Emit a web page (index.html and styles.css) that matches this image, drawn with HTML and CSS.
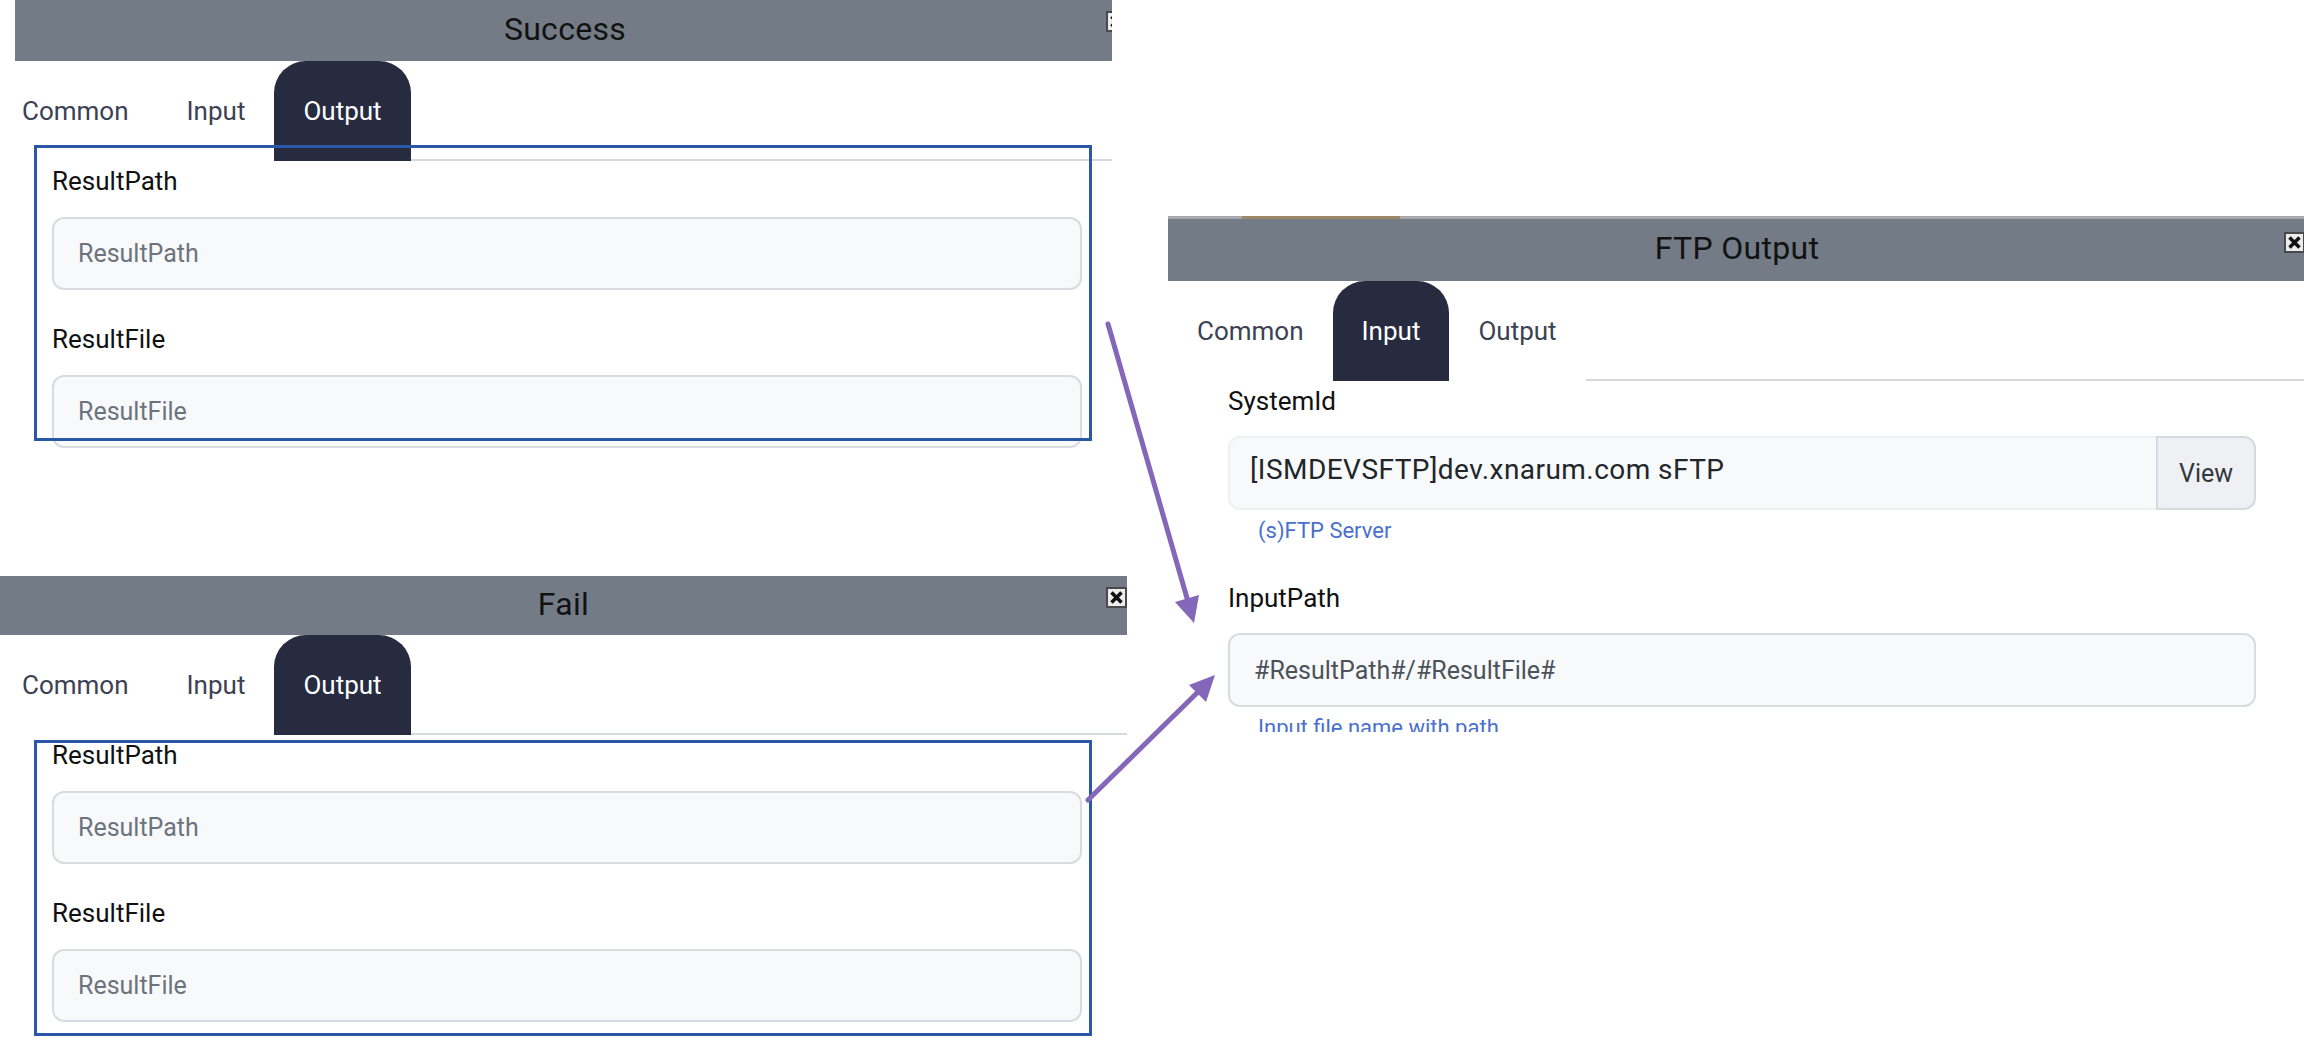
FILE: index.html
```html
<!DOCTYPE html>
<html lang="en">
<head>
<meta charset="utf-8">
<title>Flow mapping</title>
<link rel="stylesheet" href="styles.css">
</head>
<body>
<div class="canvas">

  <section class="win win-success">
    <div class="win-inner">
      <header class="win-head head-success">
        <span class="win-title">Success</span>
        <svg class="close-icon" width="21" height="21" viewBox="0 0 21 21"><rect x="1" y="1" width="19" height="19" fill="#ececec" stroke="#4a4a4a" stroke-width="2"/><path d="M5.5 5.5 L15.5 15.5 M15.5 5.5 L5.5 15.5" stroke="#111" stroke-width="3.5"/></svg>
      </header>
      <nav class="tabs tabs-shift">
        <span class="tab">Common</span>
        <span class="tab">Input</span>
        <span class="tab active">Output</span>
        <span class="tab-fill"></span>
      </nav>
      <div class="form">
        <div class="group">
          <label class="label">ResultPath</label>
          <input class="field" placeholder="ResultPath">
        </div>
        <div class="group">
          <label class="label">ResultFile</label>
          <input class="field" placeholder="ResultFile">
        </div>
      </div>
      <div class="highlight hl-success"></div>
    </div>
  </section>

  <section class="win win-fail">
    <div class="win-inner">
      <header class="win-head head-fail">
        <span class="win-title">Fail</span>
        <svg class="close-icon" width="21" height="21" viewBox="0 0 21 21"><rect x="1" y="1" width="19" height="19" fill="#ececec" stroke="#4a4a4a" stroke-width="2"/><path d="M5.5 5.5 L15.5 15.5 M15.5 5.5 L5.5 15.5" stroke="#111" stroke-width="3.5"/></svg>
      </header>
      <nav class="tabs tabs-shift">
        <span class="tab">Common</span>
        <span class="tab">Input</span>
        <span class="tab active">Output</span>
        <span class="tab-fill"></span>
      </nav>
      <div class="form">
        <div class="group">
          <label class="label">ResultPath</label>
          <input class="field" placeholder="ResultPath">
        </div>
        <div class="group">
          <label class="label">ResultFile</label>
          <input class="field" placeholder="ResultFile">
        </div>
      </div>
      <div class="highlight hl-fail"></div>
    </div>
  </section>

  <section class="win win-ftp">
    <div class="win-inner ftp-inner">
      <div class="top-strip"><span class="strip-mark"></span></div>
      <header class="win-head head-ftp">
        <span class="win-title">FTP Output</span>
        <svg class="close-icon close-ftp" width="21" height="21" viewBox="0 0 21 21"><rect x="1" y="1" width="19" height="19" fill="#ececec" stroke="#4a4a4a" stroke-width="2"/><path d="M5.5 5.5 L15.5 15.5 M15.5 5.5 L5.5 15.5" stroke="#111" stroke-width="3.5"/></svg>
      </header>
      <nav class="tabs">
        <span class="tab">Common</span>
        <span class="tab active">Input</span>
        <span class="tab">Output</span>
        <span class="tab-fill"></span>
      </nav>
      <div class="form form-ftp">
        <div class="group">
          <label class="label">SystemId</label>
          <div class="input-group">
            <input class="field field-main" value="[ISMDEVSFTP]dev.xnarum.com sFTP" readonly>
            <span class="btn-view">View</span>
          </div>
          <div class="helper">(s)FTP Server</div>
        </div>
        <div class="group">
          <label class="label">InputPath</label>
          <input class="field field-value" value="#ResultPath#/#ResultFile#">
          <div class="helper">Input file name with path</div>
        </div>
      </div>
    </div>
  </section>

  <svg class="arrows" width="2304" height="1047" viewBox="0 0 2304 1047">
    <line x1="1108" y1="324" x2="1189" y2="605" stroke="#8467b8" stroke-width="5" stroke-linecap="round"/>
    <polygon points="1194,623 1175,602 1199,595" fill="#8467b8"/>
    <line x1="1088" y1="800" x2="1201" y2="689" stroke="#8467b8" stroke-width="5" stroke-linecap="round"/>
    <polygon points="1215,675 1206,702 1189,685" fill="#8467b8"/>
  </svg>

</div>
</body>
</html>
```

FILE: styles.css
```css
* {
  box-sizing: border-box;
}

html, body {
  margin: 0;
  padding: 0;
  background: #ffffff;
}

body {
  font-family: Roboto, "Liberation Sans", Arial, sans-serif;
  color: #111;
}

.canvas {
  position: relative;
  width: 2304px;
  height: 1047px;
  overflow: hidden;
  background: #fff;
}

/* windows */
.win {
  position: absolute;
  overflow: hidden;
  background: #fff;
}

.win-success {
  left: 0;
  top: 0;
  width: 1112px;
  height: 460px;
}

.win-fail {
  left: 0;
  top: 576px;
  width: 1127px;
  height: 471px;
}

.win-ftp {
  left: 1168px;
  top: 216px;
  width: 1136px;
  height: 516px;
}

.win-inner {
  position: relative;
  width: 1127px;
}

.ftp-inner {
  width: 1138px;
}

.top-strip {
  height: 3px;
  background: #a7a9ab;
  display: flex;
}

.strip-mark {
  margin-left: 74px;
  width: 158px;
  background: #9c8768;
}

.win-head {
  position: relative;
  background: #737c86;
  display: flex;
  justify-content: center;
  align-items: center;
}

.head-success {
  height: 61px;
  margin-left: 15px;
  padding-right: 12px;
}

.head-fail {
  height: 59px;
}

.head-ftp {
  height: 62px;
}

.win-title {
  font-size: 32px;
  color: #121212;
  letter-spacing: 0.3px;
  margin-top: -4px;
}

.close-icon {
  position: absolute;
  right: 0;
  top: 11px;
}

.close-ftp {
  top: 13px;
  right: 1px;
}

/* tabs */
.tabs {
  display: flex;
  height: 100px;
}

.tabs-shift {
  margin-left: -7px;
}

.tab {
  display: flex;
  align-items: center;
  padding: 0 29px;
  font-size: 26px;
  color: #3c4252;
  white-space: nowrap;
}

.tab.active {
  background: #272b3f;
  color: #ffffff;
  border-radius: 32px 32px 0 0;
}

.tab-fill {
  flex: 1;
  border-bottom: 2px solid #d6d9dd;
}

/* form */
.form {
  padding: 5px 45px 0 52px;
}

.form-ftp {
  padding: 5px 50px 0 60px;
}

.group + .group {
  margin-top: 34px;
}

.form-ftp .group + .group {
  margin-top: 38px;
}

.label {
  display: block;
  font-size: 26px;
  line-height: 30px;
  color: #111;
  margin-bottom: 21px;
}

.form-ftp .label {
  margin-bottom: 20px;
}

.field {
  display: block;
  width: 100%;
  height: 73px;
  border: 2px solid #d8dbdf;
  border-radius: 12px;
  background: #f8f9fb;
  padding: 0 24px;
  font-family: Roboto, "Liberation Sans", Arial, sans-serif;
  font-size: 25px;
  color: #4b525a;
  outline: none;
}

.form-ftp .field {
  height: 74px;
}

.field::placeholder {
  color: #6c737c;
  opacity: 1;
}

.input-group {
  display: flex;
}

.field-main {
  flex: 1;
  border-color: #eef0f2;
  border-radius: 12px 0 0 12px;
  border-right: none;
  padding: 0 20px 8px 20px;
  font-size: 28px;
  color: #22262b;
  letter-spacing: 0.45px;
}

.btn-view {
  width: 100px;
  height: 74px;
  display: flex;
  align-items: center;
  justify-content: center;
  background: #eef0f3;
  border: 2px solid #d6d9dd;
  border-radius: 0 12px 12px 0;
  font-size: 25px;
  color: #33383e;
}

.helper {
  margin-top: 7px;
  padding-left: 30px;
  font-size: 22px;
  line-height: 28px;
  color: #4a6fce;
}

/* highlight boxes */
.highlight {
  position: absolute;
  left: 34px;
  width: 1058px;
  height: 296px;
  border: 3px solid #2b57a7;
  pointer-events: none;
}

.hl-success {
  top: 145px;
}

.hl-fail {
  top: 164px;
}

/* annotation arrows */
.arrows {
  position: absolute;
  left: 0;
  top: 0;
  pointer-events: none;
}
```
